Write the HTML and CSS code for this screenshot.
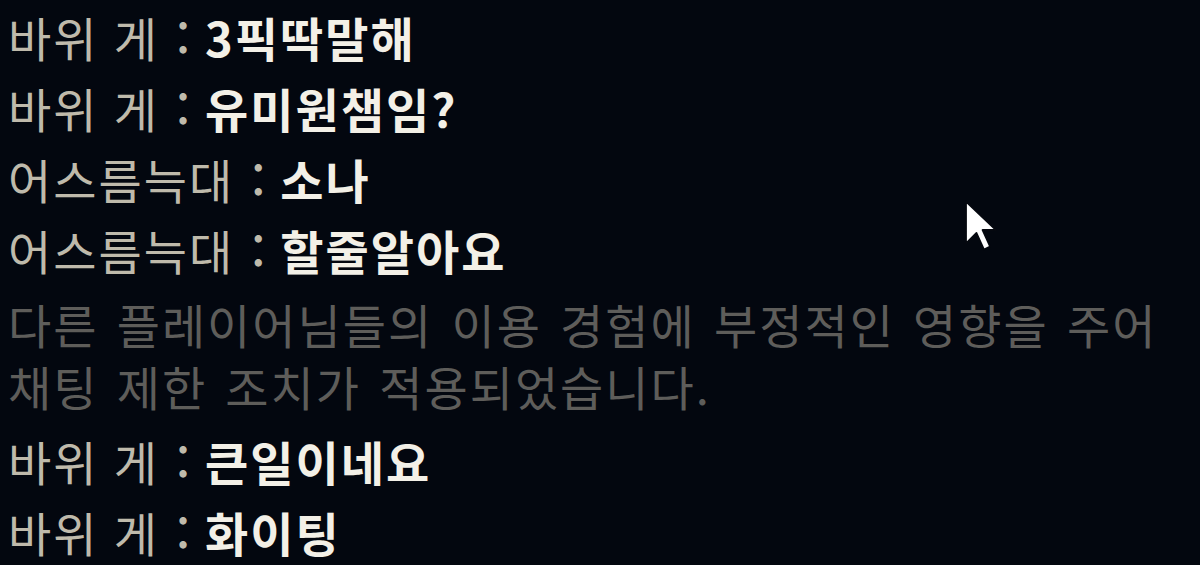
FILE: index.html
```html
<!DOCTYPE html>
<html lang="ko">
<head>
<meta charset="utf-8">
<link rel="stylesheet" href="styles.css">
</head>
<body>
<div class="chat">
  <div class="row"><span class="name">바위 게</span><span class="sep">:</span><span class="msg">3픽딱말해</span></div>
  <div class="row"><span class="name">바위 게</span><span class="sep">:</span><span class="msg">유미원챔임?</span></div>
  <div class="row"><span class="name">어스름늑대</span><span class="sep">:</span><span class="msg">소나</span></div>
  <div class="row"><span class="name">어스름늑대</span><span class="sep">:</span><span class="msg">할줄알아요</span></div>
  <div class="system">
    <div class="sysline">다른 플레이어님들의 이용 경험에 부정적인 영향을 주어</div>
    <div class="sysline">채팅 제한 조치가 적용되었습니다.</div>
  </div>
  <div class="row"><span class="name">바위 게</span><span class="sep">:</span><span class="msg">큰일이네요</span></div>
  <div class="row"><span class="name">바위 게</span><span class="sep">:</span><span class="msg">화이팅</span></div>
</div>
<svg class="cursor" width="36" height="58" viewBox="0 0 12 19">
  <path d="M1 1 L1 15 L4.5 11.5 L7 17 L9 16 L6.5 10.5 L11 10.5 Z" fill="#ffffff" stroke="#05080f" stroke-width="0.6" stroke-linejoin="round"/>
</svg>
</body>
</html>
```
FILE: styles.css
```css
html, body {
  margin: 0;
  padding: 0;
  background: #03070f;
  width: 1200px;
  height: 565px;
  overflow: hidden;
}
body {
  position: relative;
  font-family: "Noto Sans CJK KR", "Noto Sans", sans-serif;
}
.chat {
  display: flex;
  flex-direction: column;
  padding: 1px 0 0 8px;
}
.row {
  display: flex;
  align-items: baseline;
  font-size: 47px;
  line-height: 71px;
  letter-spacing: 2px;
  white-space: nowrap;
}
.name {
  color: #bfbaab;
  font-weight: 400;
}
.sep {
  color: #bfbaab;
  font-weight: 500;
  margin: 0 15px 0 17px;
  letter-spacing: 0;
}
.msg {
  color: #f3f0e7;
  font-weight: 700;
}
.system {
  display: flex;
  flex-direction: column;
  padding: 8px 0;
}
.sysline {
  font-size: 47px;
  line-height: 62px;
  height: 62px;
  letter-spacing: 2px;
  word-spacing: 3px;
  color: #5e5d5a;
  white-space: nowrap;
}
.cursor {
  position: absolute;
  left: 963px;
  top: 198px;
}
```
